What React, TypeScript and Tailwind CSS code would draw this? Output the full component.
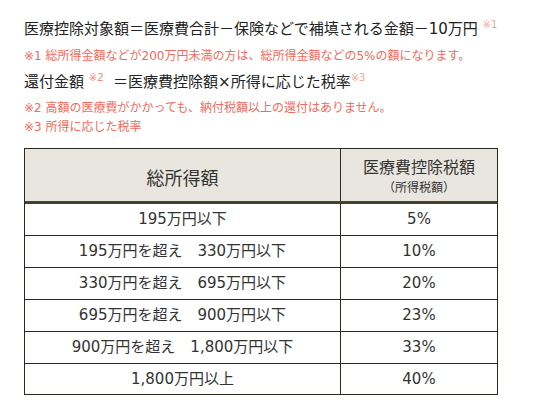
const rows = [
  { range: "195万円以下", rate: "5%" },
  { range: "195万円を超え　330万円以下", rate: "10%" },
  { range: "330万円を超え　695万円以下", rate: "20%" },
  { range: "695万円を超え　900万円以下", rate: "23%" },
  { range: "900万円を超え　1,800万円以下", rate: "33%" },
  { range: "1,800万円以上", rate: "40%" },
];

const Sup = ({ children, tone }: { children: React.ReactNode; tone: string }) => (
  <span className={`relative top-[-6px] text-[10px] ${tone}`}>{children}</span>
);

export default function App() {
  return (
    <div className="w-[550px] h-[420px] bg-white pl-[24px] font-['DejaVu_Sans','Noto_Sans_CJK_JP',sans-serif] text-[#222]">
      <div className="pt-[19px] h-[39px] text-[15px] leading-[20px] whitespace-nowrap">
        医療控除対象額＝医療費合計－保険などで補填される金額－10万円 <Sup tone="text-[#f5a29c]">※1</Sup>
      </div>
      <div className="mt-[7px] h-[20px] text-[12px] leading-[20px] text-[#f26a5c] whitespace-nowrap">
        ※1 総所得金額などが200万円未満の方は、総所得金額などの5%の額になります。
      </div>
      <div className="mt-[6px] h-[20px] text-[15px] leading-[20px] whitespace-nowrap">
        還付金額 <Sup tone="text-[#f4887e]">※2</Sup>&nbsp;&nbsp;＝医療費控除額×所得に応じた税率
        <Sup tone="text-[#f5a29c]">※3</Sup>
      </div>
      <div className="mt-[7px] h-[19px] text-[12px] leading-[19px] text-[#f26a5c] whitespace-nowrap">
        ※2 高額の医療費がかかっても、納付税額以上の還付はありません。
      </div>
      <div className="h-[19px] text-[12px] leading-[19px] text-[#f26a5c] whitespace-nowrap">
        ※3 所得に応じた税率
      </div>

      <div className="mt-[11px] w-[474px] border border-[#2a281f] text-[#333]">
        <div className="flex h-[55px] bg-[#e9e6df] border-b-[3px] border-[#45422f]">
          <div className="w-[316px] flex items-center justify-center pt-[6px] border-r border-[#2a281f] text-[18px]">
            総所得額
          </div>
          <div className="flex-1 flex flex-col items-center justify-center pt-[4px]">
            <span className="text-[16px] leading-[22px]">医療費控除税額</span>
            <span className="text-[12px] leading-[18px]">（所得税額）</span>
          </div>
        </div>
        {rows.map((r, i) => (
          <div
            key={i}
            className={`flex text-[15px] ${i < rows.length - 1 ? "h-[32px] border-b border-[#2a281f]" : "h-[30px]"}`}
          >
            <div className="w-[316px] flex items-center justify-center border-r border-[#2a281f] whitespace-pre">
              {r.range}
            </div>
            <div className="flex-1 flex items-center justify-center">{r.rate}</div>
          </div>
        ))}
      </div>
    </div>
  );
}
